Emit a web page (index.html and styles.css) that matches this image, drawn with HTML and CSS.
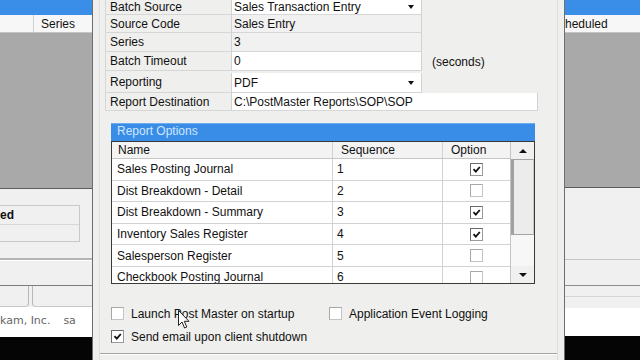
FILE: index.html
```html
<!DOCTYPE html>
<html lang="en">
  <head>
    <meta charset="UTF-8" />
    <title>Post Master Setup</title>
    <link rel="stylesheet" href="styles.css">
  </head>
  <body>
    <div class="screen">
      <div class="bg-win bg-left">
        <div class="bg-title"></div>
        <div class="bg-head">
          <div class="bg-col first"></div>
          <div class="bg-col">Series</div>
        </div>
        <div class="bg-grid"></div>
        <div class="bg-lower">
          <div class="bg-box">
            <div class="bg-box-head">ed</div>
            <div class="bg-box-row"></div>
          </div>
          <div class="bg-rule"></div>
          <div class="bg-tabs">
            <div class="bg-tab"></div>
            <div class="bg-tab"></div>
          </div>
          <div class="bg-status">kam, Inc.<span class="bg-user">sa</span></div>
        </div>
        <div class="bg-black"></div>
      </div>

      <div class="dialog">
        <div class="dialog-body">
          <div class="props">
            <div class="label">Batch Source</div>
            <div class="value combo">Sales Transaction Entry<span class="drop"></span></div>
            <div class="extra"></div>

            <div class="label">Source Code</div>
            <div class="value readonly">Sales Entry</div>
            <div class="extra"></div>

            <div class="label">Series</div>
            <div class="value readonly">3</div>
            <div class="extra"></div>

            <div class="label">Batch Timeout</div>
            <div class="value">0</div>
            <div class="extra">(seconds)</div>

            <div class="label">Reporting</div>
            <div class="value combo gap">PDF<span class="drop"></span></div>
            <div class="extra"></div>

            <div class="label">Report Destination</div>
            <div class="value wide">C:\PostMaster Reports\SOP\SOP</div>
          </div>

          <div class="group">
            <div class="group-title">Report Options</div>
            <div class="table">
              <div class="rows">
                <div class="row head">
                  <div class="cell name">Name</div>
                  <div class="cell seq">Sequence</div>
                  <div class="cell opt">Option</div>
                </div>
                <div class="row">
                  <div class="cell name">Sales Posting Journal</div>
                  <div class="cell seq">1</div>
                  <div class="cell opt center"><span class="check on"><svg viewBox="0 0 11 11"><path d="M2.5 5.2l2.3 2.4L8.8 3"/></svg></span></div>
                </div>
                <div class="row">
                  <div class="cell name">Dist Breakdown - Detail</div>
                  <div class="cell seq">2</div>
                  <div class="cell opt center"><span class="check"></span></div>
                </div>
                <div class="row">
                  <div class="cell name">Dist Breakdown - Summary</div>
                  <div class="cell seq">3</div>
                  <div class="cell opt center"><span class="check on"><svg viewBox="0 0 11 11"><path d="M2.5 5.2l2.3 2.4L8.8 3"/></svg></span></div>
                </div>
                <div class="row">
                  <div class="cell name">Inventory Sales Register</div>
                  <div class="cell seq">4</div>
                  <div class="cell opt center"><span class="check on"><svg viewBox="0 0 11 11"><path d="M2.5 5.2l2.3 2.4L8.8 3"/></svg></span></div>
                </div>
                <div class="row">
                  <div class="cell name">Salesperson Register</div>
                  <div class="cell seq">5</div>
                  <div class="cell opt center"><span class="check"></span></div>
                </div>
                <div class="row">
                  <div class="cell name">Checkbook Posting Journal</div>
                  <div class="cell seq">6</div>
                  <div class="cell opt center"><span class="check"></span></div>
                </div>
              </div>
              <div class="scrollbar">
                <div class="sb-btn"><span class="up"></span></div>
                <div class="sb-thumb"></div>
                <div class="sb-track"></div>
                <div class="sb-btn"><span class="down"></span></div>
              </div>
            </div>
          </div>

          <div class="checks">
            <label class="opt-line"><span class="check"></span>Launch Post Master on startup</label>
            <label class="opt-line"><span class="check"></span>Application Event Logging</label>
            <label class="opt-line"><span class="check on"><svg viewBox="0 0 11 11"><path d="M2.5 5.2l2.3 2.4L8.8 3"/></svg></span>Send email upon client shutdown</label>
          </div>

          <div class="footer"></div>
        </div>
      </div>

      <div class="bg-win bg-right">
        <div class="bg-title"></div>
        <div class="bg-head"><div class="bg-col clip">heduled</div></div>
        <div class="bg-grid short"></div>
        <div class="bg-lower">
          <div class="bg-band b1"></div>
          <div class="bg-band b2"></div>
          <div class="bg-band b3"></div>
          <div class="bg-band b4"></div>
          <div class="bg-status"></div>
        </div>
        <div class="bg-black"></div>
      </div>

      <svg class="cursor" width="13" height="20" viewBox="0 0 13 20">
        <path d="M0.5 0.5 L0.5 15.5 L4 12 L6.6 18 L8.8 17 L6.3 11.3 L11 11.3 Z" fill="#fff" stroke="#222" stroke-width="1"/>
      </svg>
    </div>
  </body>
</html>
```

FILE: styles.css
```css
body {
  margin: 0;
  padding: 0;
  background: #efefed;
  font-family: "Liberation Sans", Arial, sans-serif;
  font-size: 12px;
  color: #111;
}
.screen {
  position: relative;
  display: flex;
  width: 640px;
  height: 360px;
  overflow: hidden;
}

/* windows behind the dialog */
.bg-win {
  display: flex;
  flex-direction: column;
  flex: none;
  height: 360px;
  overflow: hidden;
  background: #f0f0f0;
}
.bg-left {
  width: 92px;
}
.bg-right {
  width: 75px;
}
.bg-title {
  height: 15px;
  flex: none;
  background: #3b8ee8;
}
.bg-head {
  display: flex;
  height: 18px;
  flex: none;
  box-sizing: border-box;
  background: #f7f7f7;
  border-bottom: 1px solid #c4c4c4;
}
.bg-col {
  padding-left: 7px;
  line-height: 18px;
  white-space: nowrap;
}
.bg-col.first {
  width: 33px;
  padding: 0;
  border-right: 1px solid #cfcfcf;
}
.bg-col.clip {
  padding-left: 0;
}
.bg-grid {
  height: 156px;
  flex: none;
  box-sizing: border-box;
  background: #a9a9a9;
  border-bottom: 1px solid #5c5c5c;
}
.bg-grid.short {
  height: 155px;
}
.bg-lower {
  display: flex;
  flex-direction: column;
  height: 148px;
  flex: none;
}
.bg-box {
  width: 80px;
  height: 37px;
  margin-top: 16px;
  box-sizing: border-box;
  border: 1px solid #c8c8c8;
  border-left: none;
}
.bg-box-head {
  height: 18px;
  line-height: 18px;
  font-weight: bold;
  border-bottom: 1px solid #d8d8d8;
}
.bg-rule {
  height: 2px;
  margin-top: 16px;
  background: #b4b4b4;
  border-bottom: 1px solid #fff;
}
.bg-tabs {
  display: flex;
  height: 22px;
  margin-top: 24px;
  box-sizing: border-box;
  border-top: 1px solid #7a7a7a;
}
.bg-tab {
  width: 28px;
  border-right: 1px solid #b8b8b8;
  border-bottom: 1px solid #c8c8c8;
  border-radius: 0 0 4px 0;
}
.bg-tab + .bg-tab {
  flex: 1;
  border-left: 1px solid #b8b8b8;
  border-right: none;
  margin-left: 3px;
  border-radius: 0 0 0 4px;
}
.bg-status {
  flex: 1;
  background: #fff;
  padding-top: 7px;
  font-family: "DejaVu Sans", sans-serif;
  font-size: 11px;
  color: #666;
  white-space: nowrap;
}
.bg-user {
  margin-left: 13px;
}
.bg-black {
  flex: 1;
  background: #050505;
}
.bg-band {
  flex: none;
  box-sizing: border-box;
}
.bg-band.b1 {
  height: 72px;
  border-bottom: 1px solid #c4c4c4;
}
.bg-band.b2 {
  height: 26px;
  border-bottom: 1px solid #8c8c8c;
}
.bg-band.b3 {
  height: 11px;
  border-bottom: 1px solid #d4d4d4;
}
.bg-band.b4 {
  height: 11px;
}
.bg-right .bg-status {
  flex: none;
  height: 29px;
}

/* dialog */
.dialog {
  display: flex;
  flex: none;
  width: 473px;
  height: 360px;
  box-sizing: border-box;
  padding: 0 6px;
  background: #efefed;
  border-left: 1px solid #6e6e6e;
  border-right: 1px solid #6e6e6e;
}
.dialog-body {
  display: flex;
  flex-direction: column;
  flex: 1;
  border-left: 1px solid #dedede;
  border-right: 1px solid #dedede;
}
.props {
  display: grid;
  grid-template-columns: 126px 191px 1fr;
  grid-template-rows: 15px 18px 19px 19px 22px 18px;
  margin: 0 0 0 5px;
}
.label {
  display: flex;
  align-items: center;
  box-sizing: border-box;
  padding-left: 4px;
  border-left: 1px solid #d6d6d6;
  border-bottom: 1px solid #d6d6d6;
}
.value {
  display: flex;
  align-items: center;
  box-sizing: border-box;
  padding-left: 2px;
  background: #fff;
  border-left: 1px solid #d2d2d2;
  border-right: 1px solid #d2d2d2;
  border-bottom: 1px solid #d6d6d6;
}
.value.readonly {
  background: #f1f1f1;
}
.value.gap {
  margin-top: 2px;
}
.value.wide {
  grid-column: 2 / 4;
  width: 307px;
}
.drop {
  margin-left: auto;
  margin-right: 7px;
  border-left: 3px solid transparent;
  border-right: 3px solid transparent;
  border-top: 4px solid #111;
}
.extra {
  display: flex;
  align-items: center;
  padding-left: 10px;
}

/* report options */
.group {
  width: 424px;
  margin: 12px 0 0 11px;
}
.group-title {
  height: 18px;
  box-sizing: border-box;
  padding-left: 6px;
  line-height: 15px;
  background: #3a8de6;
  border-top: 1px solid #6eaef0;
  color: #cfe6ff;
}
.table {
  display: flex;
  height: 143px;
  box-sizing: border-box;
  border: 1px solid #3a3a3a;
  background: #fff;
  overflow: hidden;
}
.rows {
  width: 398px;
  flex: none;
}
.row {
  display: flex;
  height: 21.6px;
  box-sizing: border-box;
  border-bottom: 1px solid #d2d2d2;
}
.row.head {
  height: 17px;
  background: #f3f3f3;
  border-bottom: 1px solid #c6c6c6;
}
.cell {
  display: flex;
  align-items: center;
  box-sizing: border-box;
  border-right: 1px solid #d2d2d2;
  white-space: nowrap;
}
.cell.name {
  width: 221px;
  padding-left: 5px;
}
.row.head .cell.name {
  padding-left: 6px;
}
.cell.seq {
  width: 110px;
  padding-left: 4px;
}
.row.head .cell.seq {
  padding-left: 8px;
}
.cell.opt {
  width: 67px;
  padding-left: 8px;
  border-right: none;
}
.cell.center {
  justify-content: center;
  padding-left: 0;
}
.check {
  display: inline-block;
  width: 13px;
  height: 13px;
  flex: none;
  box-sizing: border-box;
  background: #fff;
  border: 1px solid #c4c4c4;
  border-top-color: #a8a8a8;
  border-left-color: #a8a8a8;
}
.check.on {
  border-color: #9a9a9a;
  border-top-color: #6a6a6a;
  border-left-color: #6a6a6a;
}
.check svg {
  display: block;
  width: 11px;
  height: 11px;
}
.check path {
  fill: none;
  stroke: #111;
  stroke-width: 1.8;
}
.scrollbar {
  display: flex;
  flex-direction: column;
  flex: 1;
  background: #f4f4f4;
  border-left: 1px solid #c4c4c4;
}
.sb-btn {
  display: flex;
  align-items: center;
  justify-content: center;
  height: 17px;
  flex: none;
  background: #f0f0f0;
}
.up {
  border-left: 4px solid transparent;
  border-right: 4px solid transparent;
  border-bottom: 4px solid #111;
}
.down {
  border-left: 4px solid transparent;
  border-right: 4px solid transparent;
  border-top: 4px solid #111;
}
.sb-thumb {
  height: 76px;
  flex: none;
  box-sizing: border-box;
  background: #ececec;
  border: 1px solid #a4a4a4;
  border-left: 3px solid #a0a0a0;
  border-right-color: #c8c8c8;
}
.sb-track {
  flex: 1;
  background: #f7f7f7;
}

/* bottom options */
.checks {
  display: grid;
  grid-template-columns: 218px auto;
  row-gap: 10px;
  margin: 23px 0 0 11px;
}
.opt-line {
  display: flex;
  align-items: center;
  gap: 7px;
  height: 13px;
  white-space: nowrap;
}
.footer {
  margin-top: 10px;
  height: 1px;
  background: #a4a4a4;
  border-bottom: 1px solid #fff;
}
.cursor {
  position: absolute;
  left: 178px;
  top: 310px;
}
```
